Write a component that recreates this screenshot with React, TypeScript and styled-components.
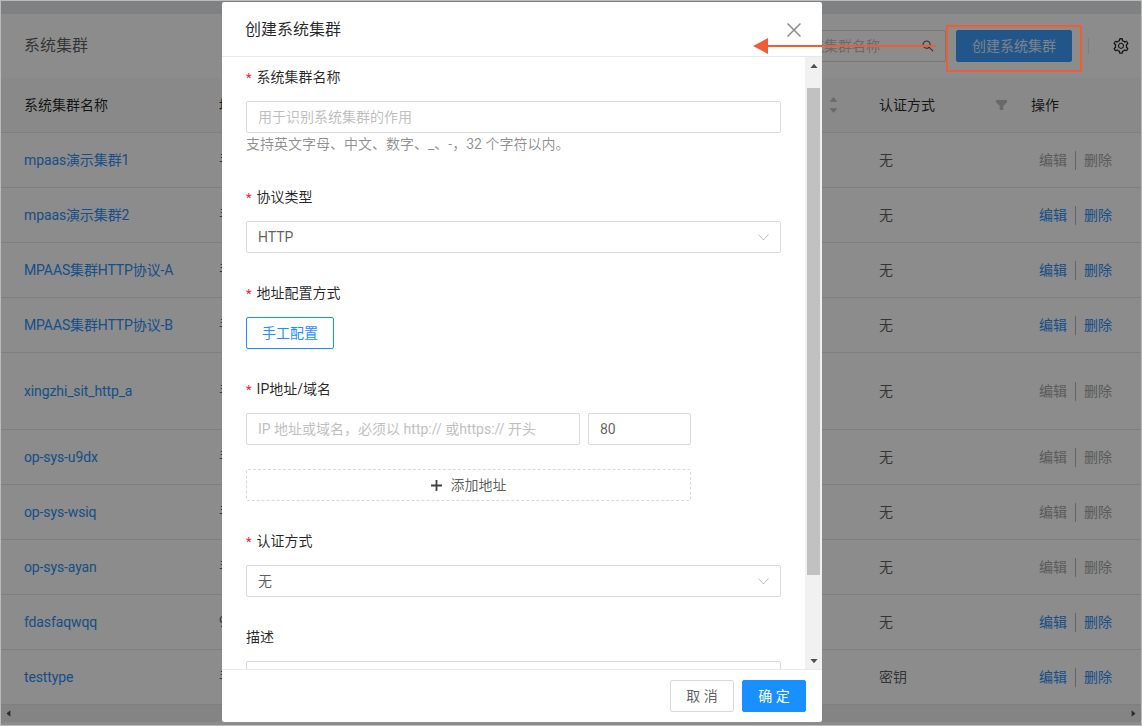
import * as React from 'react';
import styled, { createGlobalStyle } from 'styled-components';
import {
  AiOutlineSetting,
  AiOutlineSearch,
  AiFillCaretUp,
  AiFillCaretDown,
  AiFillCaretLeft,
  AiFillCaretRight,
} from 'react-icons/ai';

const GlobalStyle = createGlobalStyle`
  html, body {
    margin: 0;
    padding: 0;
    background: #fff;
  }
  * {
    box-sizing: border-box;
  }
  body {
    font-family: Roboto, "Noto Sans CJK SC", sans-serif;
    font-size: 14px;
    line-height: 22px;
    color: rgba(0, 0, 0, 0.65);
  }
`;

const Page = styled.div`
  position: relative;
  width: 1142px;
  height: 726px;
  border: 1px solid #bbbbbb;
  background: #fff;
  overflow: hidden;
  display: flex;
  flex-direction: column;
`;

const TopStrip = styled.div`
  height: 13px;
  flex: none;
  background: #e9ebef;
`;

const PageHeader = styled.header`
  height: 64px;
  flex: none;
  display: flex;
  align-items: center;
  padding: 0 10px 0 23px;
  background: #fff;
`;

const PageTitle = styled.h1`
  margin: 0;
  flex: 1;
  font-size: 16px;
  font-weight: 400;
  color: rgba(0, 0, 0, 0.65);
`;

const SearchBox = styled.div`
  width: 203px;
  height: 32px;
  display: flex;
  align-items: center;
  justify-content: space-between;
  padding: 0 10px 0 10px;
  border: 1px solid #d9d9d9;
  border-radius: 2px;
  color: #bfbfbf;
`;

const SearchIcon = styled(AiOutlineSearch)`
  font-size: 14px;
  color: rgba(0, 0, 0, 0.65);
`;

const PrimaryButton = styled.button<{ $w: number }>`
  width: ${(p) => p.$w}px;
  height: 32px;
  border: 1px solid #1890ff;
  border-radius: 2px;
  background: #1890ff;
  color: #fff;
  font: inherit;
  padding: 0;
`;

const CreateButton = styled(PrimaryButton)`
  margin-left: 10px;
  border-color: #3f9dfb;
  background: #3f9dfb;
  color: rgba(255, 255, 255, 0.85);
`;

const VDivider = styled.span`
  width: 1px;
  height: 16px;
  margin: 0 23px 0 16px;
  background: #e8e8e8;
`;

const GearIcon = styled(AiOutlineSetting)`
  font-size: 18px;
  color: rgba(0, 0, 0, 0.85);
  margin-right: 1px;
`;

const Table = styled.div`
  flex: none;
  display: flex;
  flex-direction: column;
`;

const Row = styled.div<{ $h: number; $head?: boolean }>`
  height: ${(p) => p.$h}px;
  display: grid;
  grid-template-columns: 195px 660px 152px 1fr;
  align-items: center;
  padding-left: 23px;
  border-bottom: 1px solid #e8e8e8;
  background: ${(p) => (p.$head ? '#fafafa' : '#fff')};
  color: ${(p) => (p.$head ? 'rgba(0, 0, 0, 0.85)' : 'rgba(0, 0, 0, 0.65)')};
`;

const NameLink = styled.a`
  color: #2a90f5;
  letter-spacing: -0.12px;
`;

const HeadCell = styled.div`
  display: flex;
  align-items: center;
  justify-content: space-between;
`;

const SortMark = styled.span`
  display: flex;
  flex-direction: column;
  font-size: 11px;
  line-height: 6px;
  margin-right: 40px;
  color: #bfbfbf;
`;

const FilterMark = styled.svg`
  width: 11px;
  height: 11px;
  margin-right: 24px;
  fill: #bfbfbf;
`;

const Actions = styled.div`
  display: flex;
  align-items: center;
  margin-left: 8px;
`;

const ActionLink = styled.a<{ $off: boolean }>`
  color: ${(p) => (p.$off ? '#a6a6a6' : '#2a90f5')};
`;

const ActionSep = styled.span`
  width: 1px;
  height: 19px;
  margin: 0 8px;
  background: #b5b5b5;
`;

const HScroll = styled.div`
  height: 17px;
  flex: none;
  display: flex;
  align-items: center;
  justify-content: space-between;
  padding: 0 3px;
  background: #f1f1f1;
  color: #505050;
  font-size: 9px;
`;

const Overlay = styled.div`
  position: absolute;
  inset: 0;
  background: rgba(0, 0, 0, 0.45);
`;

const Modal = styled.section`
  width: 600px;
  height: 720px;
  margin: 1px 0 0 221px;
  display: flex;
  flex-direction: column;
  background: #fff;
  border-radius: 2px;
  overflow: hidden;
`;

const ModalHeader = styled.div`
  height: 55px;
  flex: none;
  display: flex;
  align-items: center;
  justify-content: space-between;
  padding: 2px 21px 0 23px;
  border-bottom: 1px solid #e8e8e8;
`;

const ModalTitle = styled.h2`
  margin: 0;
  font-size: 16px;
  font-weight: 400;
  color: rgba(0, 0, 0, 0.85);
`;

const CloseIcon = styled.svg`
  width: 14px;
  height: 14px;
  stroke: #8c8c8c;
  stroke-width: 1.5;
  fill: none;
`;

const ModalBody = styled.div`
  flex: 1;
  min-height: 0;
  display: flex;
`;

const Form = styled.form`
  flex: 1;
  min-width: 0;
  overflow: hidden;
  padding: 9px 24px 0;
`;

const FormItem = styled.div<{ $gap?: number }>`
  margin-bottom: ${(p) => p.$gap ?? 29}px;
`;

const Label = styled.div`
  height: 22px;
  margin-bottom: 13px;
  color: rgba(0, 0, 0, 0.85);
`;

const Star = styled.span`
  color: #f5222d;
  font-size: 13px;
  margin-right: 5px;
`;

const TextInput = styled.input<{ $w?: number }>`
  display: block;
  width: ${(p) => (p.$w ? `${p.$w}px` : '100%')};
  height: 32px;
  padding: 0 11px;
  border: 1px solid #d9d9d9;
  border-radius: 2px;
  font: inherit;
  color: rgba(0, 0, 0, 0.65);
  outline: none;
  &::placeholder {
    color: #bfbfbf;
  }
`;

const Help = styled.div`
  height: 24px;
  color: rgba(0, 0, 0, 0.45);
`;

const SelectBox = styled.div`
  height: 32px;
  display: flex;
  align-items: center;
  justify-content: space-between;
  padding: 0 11px;
  border: 1px solid #d9d9d9;
  border-radius: 2px;
`;

const Chevron = styled.svg`
  width: 11px;
  height: 7px;
  stroke: #bfbfbf;
  fill: none;
`;

const GhostButton = styled.button`
  width: 88px;
  height: 32px;
  padding: 0;
  border: 1px solid #1890ff;
  border-radius: 2px;
  background: #fff;
  color: #1890ff;
  font: inherit;
`;

const InputRow = styled.div`
  display: flex;
  gap: 8px;
`;

const AddButton = styled.button`
  width: 445px;
  height: 32px;
  display: flex;
  align-items: center;
  justify-content: center;
  gap: 9px;
  padding: 0;
  border: 1px dashed #d9d9d9;
  border-radius: 2px;
  background: #fff;
  color: rgba(0, 0, 0, 0.65);
  font: inherit;
`;

const PlusIcon = styled.svg`
  width: 11px;
  height: 11px;
  fill: rgba(0, 0, 0, 0.75);
`;

const TextArea = styled.div`
  height: 80px;
  border: 1px solid #d9d9d9;
  border-radius: 2px;
`;

const VScroll = styled.div`
  width: 17px;
  flex: none;
  display: flex;
  flex-direction: column;
  background: #f1f1f1;
  color: #505050;
`;

const ScrollArrow = styled.div`
  height: 17px;
  flex: none;
  display: flex;
  align-items: center;
  justify-content: center;
  font-size: 10px;
`;

const ScrollTrack = styled.div`
  flex: 1;
  padding: 14px 2px 77px 2px;
  display: flex;
`;

const ScrollThumb = styled.div`
  flex: 1;
  background: #c1c1c1;
`;

const ModalFooter = styled.div`
  height: 53px;
  flex: none;
  display: flex;
  align-items: center;
  justify-content: flex-end;
  gap: 8px;
  padding: 0 16px;
  border-top: 1px solid #e8e8e8;
`;

const CancelButton = styled.button`
  width: 64px;
  height: 32px;
  padding: 0;
  border: 1px solid #d9d9d9;
  border-radius: 2px;
  background: #fff;
  color: rgba(0, 0, 0, 0.65);
  font: inherit;
`;

const MarkBox = styled.div`
  position: absolute;
  left: 945px;
  top: 24px;
  width: 136px;
  height: 47px;
  border: 2px solid #f25c34;
`;

const MarkArrow = styled.svg`
  position: absolute;
  left: 752px;
  top: 36px;
  width: 184px;
  height: 18px;
`;

interface IRowData {
  name: string;
  addr: string;
  auth: string;
  editable: boolean;
  height?: number;
}

const rows: IRowData[] = [
  { name: 'mpaas演示集群1', addr: '手工配置', auth: '无', editable: false },
  { name: 'mpaas演示集群2', addr: '手工配置', auth: '无', editable: true },
  { name: 'MPAAS集群HTTP协议-A', addr: '手工配置', auth: '无', editable: true },
  { name: 'MPAAS集群HTTP协议-B', addr: '手工配置', auth: '无', editable: true },
  { name: 'xingzhi_sit_http_a', addr: '手工配置', auth: '无', editable: false, height: 77 },
  { name: 'op-sys-u9dx', addr: '手工配置', auth: '无', editable: false },
  { name: 'op-sys-wsiq', addr: '手工配置', auth: '无', editable: false },
  { name: 'op-sys-ayan', addr: '手工配置', auth: '无', editable: false },
  { name: 'fdasfaqwqq', addr: '9.9.9.9', auth: '无', editable: true },
  { name: 'testtype', addr: '手工配置', auth: '密钥', editable: true },
];

const noop = (e: React.FormEvent) => e.preventDefault();

const SelectArrow = () => (
  <Chevron viewBox="0 0 11 7">
    <path d="M0.5 0.5 L5.5 6 L10.5 0.5" />
  </Chevron>
);

const App: React.FC = () => {
  return (
    <Page>
      <GlobalStyle />
      <TopStrip />
      <PageHeader>
        <PageTitle>系统集群</PageTitle>
        <SearchBox>
          <span>请输入系统集群名称</span>
          <SearchIcon />
        </SearchBox>
        <CreateButton $w={116}>创建系统集群</CreateButton>
        <VDivider />
        <GearIcon />
      </PageHeader>
      <Table>
        <Row $h={55} $head>
          <div>系统集群名称</div>
          <HeadCell>
            <span>地址</span>
            <SortMark>
              <AiFillCaretUp />
              <AiFillCaretDown />
            </SortMark>
          </HeadCell>
          <HeadCell>
            <span>认证方式</span>
            <FilterMark viewBox="0 0 12 12">
              <path d="M0 0h12v2.4L8 6.4V11H4V6.4L0 2.4z" />
            </FilterMark>
          </HeadCell>
          <div>操作</div>
        </Row>
        {rows.map((r) => (
          <Row key={r.name} $h={r.height ?? 55}>
            <NameLink>{r.name}</NameLink>
            <div>{r.addr}</div>
            <div>{r.auth}</div>
            <Actions>
              <ActionLink $off={!r.editable}>编辑</ActionLink>
              <ActionSep />
              <ActionLink $off={!r.editable}>删除</ActionLink>
            </Actions>
          </Row>
        ))}
      </Table>
      <HScroll>
        <AiFillCaretLeft />
        <AiFillCaretRight />
      </HScroll>

      <Overlay>
        <Modal>
          <ModalHeader>
            <ModalTitle>创建系统集群</ModalTitle>
            <CloseIcon viewBox="0 0 14 14">
              <path d="M0.5 0.5 L13.5 13.5 M13.5 0.5 L0.5 13.5" />
            </CloseIcon>
          </ModalHeader>
          <ModalBody>
            <Form onSubmit={noop}>
              <FormItem $gap={29}>
                <Label><Star>*</Star>系统集群名称</Label>
                <TextInput readOnly placeholder="用于识别系统集群的作用" />
                <Help>支持英文字母、中文、数字、_、-，32 个字符以内。</Help>
              </FormItem>
              <FormItem>
                <Label><Star>*</Star>协议类型</Label>
                <SelectBox>
                  <span>HTTP</span>
                  <SelectArrow />
                </SelectBox>
              </FormItem>
              <FormItem>
                <Label><Star>*</Star>地址配置方式</Label>
                <GhostButton type="button">手工配置</GhostButton>
              </FormItem>
              <FormItem $gap={24}>
                <Label><Star>*</Star>IP地址/域名</Label>
                <InputRow>
                  <TextInput readOnly $w={334} placeholder="IP 地址或域名，必须以 http:// 或https:// 开头" />
                  <TextInput readOnly $w={103} value="80" />
                </InputRow>
              </FormItem>
              <FormItem>
                <AddButton type="button">
                  <PlusIcon viewBox="0 0 11 11">
                    <path d="M4.6 0h1.8v4.6H11v1.8H6.4V11H4.6V6.4H0V4.6h4.6z" />
                  </PlusIcon>
                  添加地址
                </AddButton>
              </FormItem>
              <FormItem>
                <Label><Star>*</Star>认证方式</Label>
                <SelectBox>
                  <span>无</span>
                  <SelectArrow />
                </SelectBox>
              </FormItem>
              <FormItem>
                <Label>描述</Label>
                <TextArea />
              </FormItem>
            </Form>
            <VScroll>
              <ScrollArrow><AiFillCaretUp /></ScrollArrow>
              <ScrollTrack>
                <ScrollThumb />
              </ScrollTrack>
              <ScrollArrow><AiFillCaretDown /></ScrollArrow>
            </VScroll>
          </ModalBody>
          <ModalFooter>
            <CancelButton type="button">取 消</CancelButton>
            <PrimaryButton type="button" $w={64}>确 定</PrimaryButton>
          </ModalFooter>
        </Modal>
      </Overlay>

      <MarkBox />
      <MarkArrow viewBox="0 0 184 18">
        <path d="M0 9 L15 1 V7.9 H183 V10.1 H15 V17 Z" fill="#f25c34" />
      </MarkArrow>
    </Page>
  );
};

export default App;
